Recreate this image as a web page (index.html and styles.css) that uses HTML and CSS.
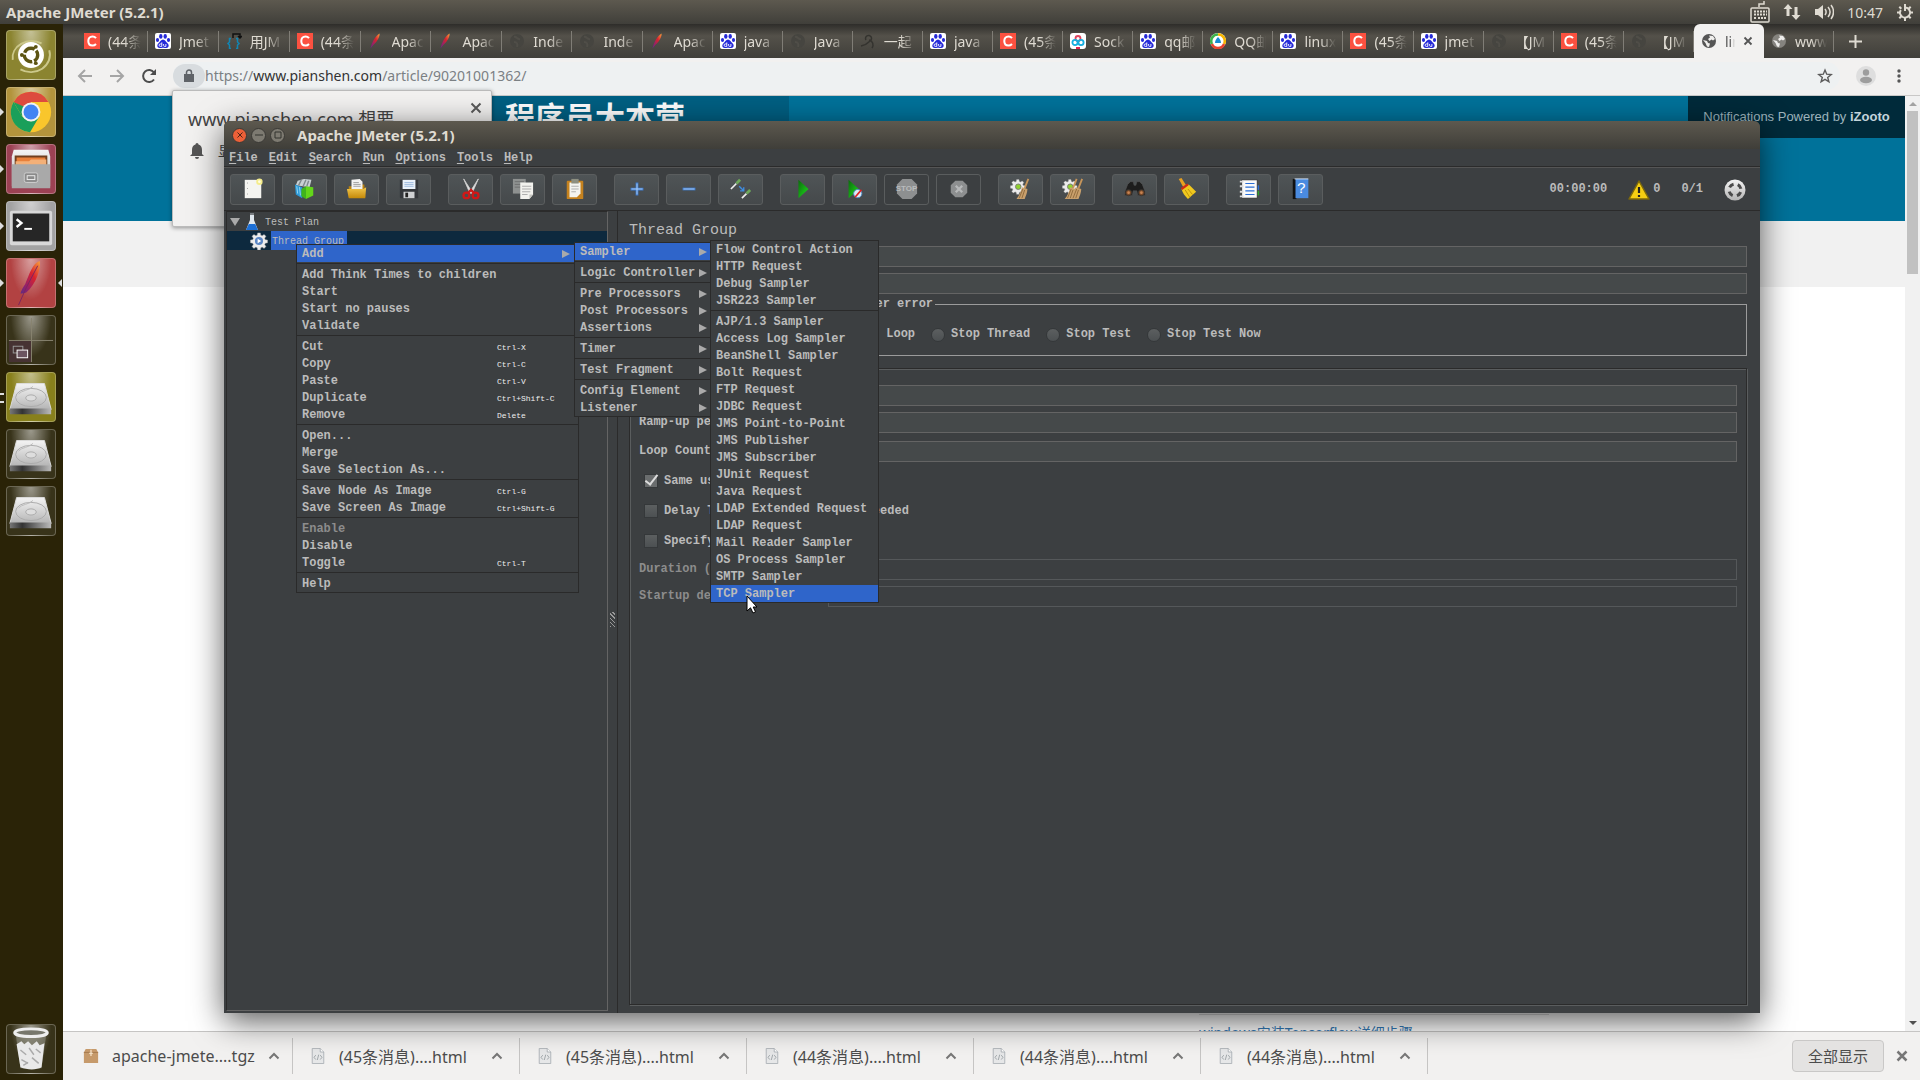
FILE: index.html
```html
<!DOCTYPE html>
<html lang="zh-CN">
<head>
    <meta charset="UTF-8">
    <meta name="viewport" content="width=device-width, initial-scale=1.0">
    <title>Apache JMeter (5.2.1)</title>
    <link rel="stylesheet" href="styles.css">
</head>
<body>
    <!-- Shared icons -->
    <svg class="defs" width="0" height="0" aria-hidden="true">
        <defs>
            <linearGradient id="metal" x1="0" y1="0" x2="0" y2="1"><stop offset="0" stop-color="#f4f4f4"/><stop offset="1" stop-color="#b4b4b4"/></linearGradient>
            <linearGradient id="base" x1="0" y1="0" x2="1" y2="0"><stop offset="0" stop-color="#777"/><stop offset=".3" stop-color="#333"/><stop offset="1" stop-color="#bbb"/></linearGradient>
            <linearGradient id="plume" x1="1" y1="0" x2="0" y2="1"><stop offset="0" stop-color="#f9a13c"/><stop offset=".4" stop-color="#d8232e"/><stop offset=".75" stop-color="#93216b"/><stop offset="1" stop-color="#5b2d84"/></linearGradient>
            <linearGradient id="go" x1="0" y1="0" x2="1" y2="1"><stop offset="0" stop-color="#0b6b0b"/><stop offset="1" stop-color="#1fe01f"/></linearGradient>
            <linearGradient id="gold" x1="0" y1="0" x2="0" y2="1"><stop offset="0" stop-color="#f3c84f"/><stop offset="1" stop-color="#c58a09"/></linearGradient>
        </defs>
        <symbol id="baidu" viewBox="0 0 16 16">
            <rect width="16" height="16" rx="2" fill="#fff"/>
            <g fill="#2529d8"><ellipse cx="5.8" cy="3.4" rx="1.7" ry="2.4"/><ellipse cx="10.2" cy="3.4" rx="1.7" ry="2.4"/><ellipse cx="2.5" cy="7" rx="1.6" ry="2.1"/><ellipse cx="13.5" cy="7" rx="1.6" ry="2.1"/><path d="M8 6.6c2 0 2.700 2.300 4.500 3.700 2 1.700 1.300 4.700-1.200 4.700-1.300 0-2-.3-3.300-.3s-2 .3-3.300.3c-2.500 0-3.200-3-1.200-4.700C5.300 8.900 6 6.600 8 6.600z"/></g>
            <path d="M6.800 9.400v4H5.300a1.200 1.200 0 010-2.400h1.500M8.600 11v1.500c0 .6.400.9.900.9h1.400V11" fill="none" stroke="#fff" stroke-width=".9"/>
        </symbol>
        <symbol id="csdn" viewBox="0 0 16 16"><rect width="16" height="16" fill="#fc5140"/><path d="M12 5.200C11 3.900 9.800 3.400 8.500 3.400 5.900 3.400 4.300 5.300 4.300 8s1.600 4.600 4.200 4.600c1.300 0 2.500-.5 3.500-1.600" fill="none" stroke="#fff" stroke-width="2"/></symbol>
        <symbol id="feather" viewBox="0 0 16 16"><path d="M2.500 15.500C3.500 10 7 3.500 11.500.5 12 3 10 7.800 5.500 11.800z" fill="url(#plume)"/></symbol>
        <symbol id="globe-dark" viewBox="0 0 16 16"><circle cx="8" cy="8" r="7" fill="#464540"/><path d="M5 4c3-1 3 3 6 2M5 9c3 0 4 2 3 5" stroke="#504e48" stroke-width="2" fill="none"/></symbol>
        <symbol id="globe" viewBox="0 0 16 16"><circle cx="8" cy="8" r="7" fill="currentColor"/><path d="M2 7l4 1 1 2 2 .5-1 3.500-2-.5-1.500-3.500zM8 2.500l4 .5 2 3-2 1.500-1.500-1L8.500 8 7 6l2-1.500z" fill="#efeeec"/></symbol>
        <symbol id="disk" viewBox="0 0 50 50">
            <path d="M10 11h29l7 27H3z" fill="url(#metal)" stroke="#ddd"/><path d="M3 37h43v6H3z" fill="url(#base)"/>
            <ellipse cx="25" cy="25.500" rx="16" ry="9.500" fill="none" stroke="#aaa"/><ellipse cx="25" cy="26" rx="5.500" ry="3.200" fill="#ddd" stroke="#aaa"/><path d="M27 14c-3 4-12 4-15 8" fill="none" stroke="#bbb"/>
        </symbol>
        <symbol id="htmlfile" viewBox="0 0 14 18"><path d="M.5.500h9l4 4v13H.5z" fill="#e6e7e8" stroke="#aab0b4"/><path d="M9.500.5v4h4" fill="#fff" stroke="#aab0b4"/><path d="M4.500 8L2.500 10.500l2 2.500M9.500 8l2 2.500-2 2.500M7.800 7.500l-1.600 6" fill="none" stroke="#9aa0a4"/></symbol>
        <symbol id="caret" viewBox="0 0 12 8"><path d="M1.500 6.500L6 2l4.500 4.500" fill="none" stroke="#777" stroke-width="2"/></symbol>
        <symbol id="gear" viewBox="0 0 20 20">
            <path d="M8.500 1h3l.5 2.500 1.500.7 2.200-1.400 2 2-1.400 2.200.7 1.500 2.500.5v3l-2.500.5-.7 1.500 1.400 2.200-2 2-2.200-1.400-1.500.7-.5 2.500h-3L8 17.500l-1.500-.7-2.200 1.400-2-2L3.700 14 3 12.500.500 12V9L3 8.500 3.700 7 2.300 4.800l2-2 2.200 1.400L8 3.500z" fill="#ececec" stroke="#aaa" stroke-width=".5"/>
        </symbol>
        <symbol id="broom" viewBox="0 0 24 24"><path d="M20 1l-4 10" stroke="#c7955a" stroke-width="2"/><path d="M13 10l6 2c0 4-2 8-3 11H7c3-4 5-8 6-13z" fill="#c9a06c"/><path d="M14 12l-4 10M16 13l-3 9" stroke="#7e5a2e" stroke-width=".8"/></symbol>
    </svg>

    <header class="panel">
        <h1>Apache JMeter (5.2.1)</h1>
        <div class="indicators">
            <svg width="20" height="22" viewBox="0 0 20 22"><path d="M9 6V3h5V0" fill="none" stroke="#dfdbd2" stroke-width="1.500"/><rect x="1" y="7" width="18" height="14" rx="1" fill="none" stroke="#dfdbd2" stroke-width="1.500"/><path d="M4 10.500h13M4 13.500h13M4 17h3m1 0h5m1 0h3" stroke="#dfdbd2" stroke-width="2" stroke-dasharray="2 1"/></svg>
            <svg width="18" height="18" viewBox="0 0 18 18"><path d="M5 1L.5 6h3v7h3V6h3zM13 17l4.500-5h-3V4h-3v8h-3z" fill="#dfdbd2"/></svg>
            <svg width="20" height="18" viewBox="0 0 20 18"><path d="M1 6h3l5-4v14l-5-4H1z" fill="#dfdbd2"/><path d="M11 6c1.500 2 1.500 4 0 6M14 4c2.500 3 2.500 7 0 10M17 2c3.300 4 3.300 10 0 14" fill="none" stroke="#dfdbd2" stroke-width="1.500"/></svg>
            <time>10:47</time>
            <svg width="18" height="18" viewBox="0 0 18 18"><circle cx="9" cy="9.500" r="5" fill="none" stroke="#dfdbd2" stroke-width="2" stroke-dasharray="26 5.400" stroke-dashoffset="-10.500" transform="rotate(150 9 9.500)"/><path d="M9 1v7M1 9.500h3m10 0h3M9 14v4M3.300 3.800l2 2M14.700 3.800l-2 2M3.300 15.200l2-2m9.400 2l-2-2" stroke="#dfdbd2" stroke-width="2"/></svg>
        </div>
    </header>

    <div class="desktop">
        <nav class="launcher">
            <a href="#" class="tile olive" title="Dash"><svg viewBox="0 0 50 50"><path d="M6 30a20 17 0 0130-17M44 20a20 18 0 01-30 20" fill="none" stroke="#ccc88a" stroke-width="2"/><circle cx="25" cy="25" r="13.500" fill="#fff"/><circle cx="25" cy="25" r="7" fill="none" stroke="#5c5413" stroke-width="3.500" stroke-dasharray="12.600 2" stroke-dashoffset="5"/><g fill="#5c5413"><circle cx="15.500" cy="25" r="2"/><circle cx="30" cy="16.500" r="2"/><circle cx="30" cy="33.500" r="2"/></g></svg></a>
            <a href="#" class="tile gold run" title="Chrome"><svg viewBox="0 0 50 50"><circle cx="25" cy="25" r="21" fill="#f9c62c"/><path d="M25 25L6.800 14.500A21 21 0 0143.200 14.500H25z" fill="#dd4b3e"/><path d="M6.800 14.500A21 21 0 0024 46l9.500-16L25 35l-9-5z" fill="#1a9f5a"/><path d="M6.800 14.500L16 30l3-10z" fill="#1a9f5a"/><circle cx="25" cy="25" r="9.800" fill="#f2f2f2"/><circle cx="25" cy="25" r="7.800" fill="#4284f3"/></svg></a>
            <a href="#" class="tile rose run" title="Files"><svg viewBox="0 0 50 50"><path d="M7 5h36l2 7v31H5V12z" fill="url(#metal)"/><path d="M8 11h34v10H8z" fill="#703f1e"/><path d="M10 13h30v8H10z" fill="#e9803a"/><path d="M9 17l14 0 2-2h16v6H9z" fill="#f3b078"/><path d="M5 20h40v25H5z" fill="#a9a9a9"/><rect x="18" y="29" width="14" height="10" rx="2" fill="#8b8b8b" stroke="#d0d0d0"/><rect x="21" y="32" width="8" height="4" fill="none" stroke="#eee"/></svg></a>
            <a href="#" class="tile silver run" title="Terminal"><svg viewBox="0 0 50 50"><rect x="3" y="9" width="44" height="36" rx="2" fill="#d8d8d8"/><rect x="6" y="12" width="38" height="29" fill="#262626"/><path d="M10 18l5 4-5 4" fill="none" stroke="#fff" stroke-width="2.500"/><path d="M18 28h8" stroke="#fff" stroke-width="2"/></svg></a>
            <a href="#" class="tile red run active" title="JMeter"><svg viewBox="0 0 50 50"><path d="M14 36c1-4 3-7 5-10 4-10 8-22 15-24 2 8-4 24-14 33-2 1-4 1-6 1z" fill="url(#plume)"/><path d="M12 48l8-18L32 7" stroke="#7b2560" fill="none"/></svg></a>
            <a href="#" class="tile glass" title="Workspaces"><svg viewBox="0 0 50 50"><path d="M2 26h23v22H2z" fill="#463233"/><path d="M25.500 2v46M2 25.500h46" stroke="#888470"/><rect x="6.500" y="31.500" width="10" height="7" fill="none" stroke="#999"/><rect x="10.500" y="35.500" width="11" height="8" fill="#6b5460" stroke="#fff"/></svg></a>
            <a href="#" class="tile moss run twice" title="Disk 1"><svg><use href="#disk"/></svg></a>
            <a href="#" class="tile glass" title="Disk 2"><svg><use href="#disk"/></svg></a>
            <a href="#" class="tile glass" title="Disk 3"><svg><use href="#disk"/></svg></a>
            <a href="#" class="tile glass trash" title="Trash"><svg viewBox="0 0 50 50"><path d="M9 9h32l-5 36H14z" fill="#8e8d80" opacity=".6"/><path d="M10 20l5-3 3 3 4-3 4 4 5-4 3 4 5-2-3 25c-5 3-15 3-22 0z" fill="#e9e9e9"/><path d="M14 26l6 5m3-7l5 7m2-6l5 4M15 36l7 4m4-6l7 6M17 42l5-3" stroke="#aaa" stroke-width="1.500"/><ellipse cx="25" cy="8" rx="17" ry="4" fill="#77776c" stroke="#eee" stroke-width="3"/></svg></a>
        </nav>

        <main class="browser">
            <div class="tabs">
                <a href="#" class="tab"><svg><use href="#csdn"/></svg><span>(44条</span></a>
                <a href="#" class="tab"><svg><use href="#baidu"/></svg><span>Jmet</span></a>
                <a href="#" class="tab"><svg viewBox="0 0 16 16"><path d="M5 5.500H3.500V9L2 10.500 3.500 12v3.500H5M10 5.500h1.500V9l1.500 1.500-1.500 1.500v3.500H10" fill="none" stroke="#1186b4" stroke-width="1.500"/><path d="M7 5V1h7v4m-2-2l2 2 2-2" fill="none" stroke="#111" stroke-width="1.500"/></svg><span>用JM</span></a>
                <a href="#" class="tab"><svg><use href="#csdn"/></svg><span>(44条</span></a>
                <a href="#" class="tab"><svg><use href="#feather"/></svg><span>Apac</span></a>
                <a href="#" class="tab"><svg><use href="#feather"/></svg><span>Apac</span></a>
                <a href="#" class="tab"><svg><use href="#globe-dark"/></svg><span>Inde</span></a>
                <a href="#" class="tab"><svg><use href="#globe-dark"/></svg><span>Inde</span></a>
                <a href="#" class="tab"><svg><use href="#feather"/></svg><span>Apac</span></a>
                <a href="#" class="tab"><svg><use href="#baidu"/></svg><span>java</span></a>
                <a href="#" class="tab"><svg><use href="#globe-dark"/></svg><span>Java</span></a>
                <a href="#" class="tab"><svg viewBox="0 0 16 16"><path d="M6 7a3 3 0 114 1c-2 2-3 4-9 5m8-6c4 1 5 5 3 8" fill="none" stroke="#34332f" stroke-width="1.500"/></svg><span>一起</span></a>
                <a href="#" class="tab"><svg><use href="#baidu"/></svg><span>java</span></a>
                <a href="#" class="tab"><svg><use href="#csdn"/></svg><span>(45条</span></a>
                <a href="#" class="tab"><svg viewBox="0 0 16 16"><rect width="16" height="16" rx="3" fill="#fff"/><g fill="none" stroke-width="1.800"><circle cx="8" cy="5.500" r="2.500" stroke="#e0455f"/><circle cx="5" cy="9.500" r="2.600" stroke="#16aee0"/><circle cx="11" cy="9.500" r="2.600" stroke="#16aee0"/></g><path d="M6 15h4" stroke="#e0244f" stroke-width="2"/></svg><span>Sock</span></a>
                <a href="#" class="tab"><svg><use href="#baidu"/></svg><span>qq邮</span></a>
                <a href="#" class="tab"><svg viewBox="0 0 16 16"><circle cx="8" cy="8" r="8" fill="#fff"/><path d="M8 1.500A6.500 6.500 0 002 11" fill="none" stroke="#3db14b" stroke-width="2.500"/><path d="M8 1.500A6.500 6.500 0 0114 11" fill="none" stroke="#f7b500" stroke-width="2.500"/><path d="M2 11a6.500 6.500 0 0012 0" fill="none" stroke="#e8432e" stroke-width="2.500"/><path d="M8 4c2 2 3 4 3 6H5c0-2 1-4 3-6z" fill="#178bd3"/></svg><span>QQ邮</span></a>
                <a href="#" class="tab"><svg><use href="#baidu"/></svg><span>linux</span></a>
                <a href="#" class="tab"><svg><use href="#csdn"/></svg><span>(45条</span></a>
                <a href="#" class="tab"><svg><use href="#baidu"/></svg><span>jmet</span></a>
                <a href="#" class="tab"><svg><use href="#globe-dark"/></svg><span>【JM</span></a>
                <a href="#" class="tab"><svg><use href="#csdn"/></svg><span>(45条</span></a>
                <a href="#" class="tab"><svg><use href="#globe-dark"/></svg><span>【JM</span></a>
                <a href="#" class="tab current"><svg><use href="#globe"/></svg><span>lin</span><svg class="x" viewBox="0 0 10 10"><path d="M1.500 1.500l7 7m0-7l-7 7" stroke="#555" stroke-width="1.800"/></svg></a>
                <a href="#" class="tab grey"><svg><use href="#globe"/></svg><span>www</span></a>
                <button class="newtab" aria-label="New tab"><svg width="13" height="13" viewBox="0 0 13 13"><path d="M6.500 0v13M0 6.500h13" stroke="#dfdbd2" stroke-width="2"/></svg></button>
            </div>

            <div class="address">
                <button aria-label="Back"><svg viewBox="0 0 16 16"><path d="M15 8H2m6-6L2 8l6 6" fill="none" stroke="#a5a5a5" stroke-width="2"/></svg></button>
                <button aria-label="Forward"><svg viewBox="0 0 16 16"><path d="M1 8h13M8 2l6 6-6 6" fill="none" stroke="#a5a5a5" stroke-width="2"/></svg></button>
                <button aria-label="Reload"><svg viewBox="0 0 16 16"><path d="M13 11.500A6 6 0 1113 4.500" fill="none" stroke="#4c4c4c" stroke-width="2"/><path d="M15 1v6H9z" fill="#4c4c4c"/></svg></button>
                <div class="omnibox">
                    <span class="lock"><svg width="10" height="13" viewBox="0 0 10 13"><path d="M0 5h10v8H0z" fill="#5f6368"/><path d="M2.500 6V3.500a2.500 2.500 0 015 0V6" fill="none" stroke="#5f6368" stroke-width="1.500"/></svg></span>
                    <span class="url">https://<b>www.pianshen.com</b>/article/90201001362/</span>
                    <svg width="16" height="16" viewBox="0 0 16 16"><path d="M8 2l1.700 4.200 4.500.3-3.500 2.900 1.200 4.400L8 11.400l-3.900 2.400 1.200-4.400L1.800 6.500l4.500-.3z" fill="none" stroke="#5c5c5c" stroke-width="1.400"/></svg>
                </div>
                <svg class="avatar" viewBox="0 0 20 20"><circle cx="10" cy="10" r="10" fill="#dedede"/><circle cx="10" cy="6.500" r="3.200" fill="#9d9d9d"/><ellipse cx="10" cy="14" rx="6" ry="3.200" fill="#9d9d9d"/></svg>
                <svg class="dots" viewBox="0 0 4 14"><g fill="#555"><circle cx="2" cy="2" r="1.700"/><circle cx="2" cy="7" r="1.700"/><circle cx="2" cy="12" r="1.700"/></g></svg>
            </div>

            <div class="page">
                <div class="site">
                    <div class="masthead">
                        <div class="logo">程序员大本营</div>
                        <div class="izooto">Notifications Powered by <b>iZooto</b></div>
                    </div>
                    <div class="subnav"></div>
                    <a href="#" class="related">windows安装Tensorflow详细步骤</a>
                </div>
                <div class="scrollbar"><i class="up"></i><div class="thumb"></div><i class="down"></i></div>
            </div>

            <footer class="downloads">
                <div class="file"><svg viewBox="0 0 18 18"><path d="M3 1h12l2 4v12H1V5z" fill="#c69a6b"/><path d="M1 5h16" stroke="#a3794c"/><path d="M9 2v7M7 6h4" stroke="#f3dfc4" stroke-width="1.500"/></svg><span>apache-jmete....tgz</span><svg class="caret"><use href="#caret"/></svg></div>
                <div class="file"><svg><use href="#htmlfile"/></svg><span>(45条消息)....html</span><svg class="caret"><use href="#caret"/></svg></div>
                <div class="file"><svg><use href="#htmlfile"/></svg><span>(45条消息)....html</span><svg class="caret"><use href="#caret"/></svg></div>
                <div class="file"><svg><use href="#htmlfile"/></svg><span>(44条消息)....html</span><svg class="caret"><use href="#caret"/></svg></div>
                <div class="file"><svg><use href="#htmlfile"/></svg><span>(44条消息)....html</span><svg class="caret"><use href="#caret"/></svg></div>
                <div class="file"><svg><use href="#htmlfile"/></svg><span>(44条消息)....html</span><svg class="caret"><use href="#caret"/></svg></div>
                <button class="show-all">全部显示</button>
                <button class="close" aria-label="Close"><svg width="12" height="12" viewBox="0 0 12 12"><path d="M1.500 1.500l9 9m0-9l-9 9" stroke="#777" stroke-width="2.500"/></svg></button>
            </footer>
        </main>
    </div>

    <div class="permission">
        <div class="ask"><span>www.pianshen.com 想要</span><button aria-label="Close"><svg width="12" height="12" viewBox="0 0 12 12"><path d="M1.500 1.500l9 9m0-9l-9 9" stroke="#5a5a5a" stroke-width="2"/></svg></button></div>
        <div class="what"><svg width="14" height="16" viewBox="0 0 14 16"><path d="M7 0a1.500 1.500 0 011.500 1.500C11 2.300 12 4 12 7v4l2 2H0l2-2V7c0-3 1-4.700 3.500-5.500A1.500 1.500 0 017 0zM5 14h4a2 2 0 01-4 0z" fill="#555"/></svg><span>显示通知</span></div>
    </div>

    <section class="jmeter">
        <div class="titlebar">
            <button class="dot shut" aria-label="Close"><svg viewBox="0 0 8 8"><path d="M1.500 1.500l5 5m0-5l-5 5" stroke="#4b2417"/></svg></button>
            <button class="dot" aria-label="Minimize"><svg viewBox="0 0 8 8"><path d="M0 4h8" stroke="#33322e"/></svg></button>
            <button class="dot" aria-label="Maximize"><svg viewBox="0 0 8 8"><path d="M1 1h6v6H1z" fill="none" stroke="#33322e"/></svg></button>
            <h2>Apache JMeter (5.2.1)</h2>
        </div>
        <nav class="menubar">
            <button><u>F</u>ile</button>
            <button><u>E</u>dit</button>
            <button><u>S</u>earch</button>
            <button><u>R</u>un</button>
            <button><u>O</u>ptions</button>
            <button><u>T</u>ools</button>
            <button><u>H</u>elp</button>
        </nav>

        <div class="toolbar">
            <div class="group">
                <button aria-label="New"><svg viewBox="0 0 24 24"><path d="M3 2h18v20H3z" fill="#f4f4f0"/><path d="M6 5v14" stroke="#999" stroke-dasharray="1 5"/><circle cx="19" cy="4" r="3.500" fill="#f4ec8c"/><circle cx="19" cy="4" r="1.500" fill="#fffde0"/></svg></button>
                <button aria-label="Templates"><svg viewBox="0 0 24 24"><path d="M2 8l2-5 7-2 8 1-2 8z" fill="#c9d0d3"/><path d="M5 8l3-6m2 7l3-7m1 7l2-6" stroke="#7f898d" stroke-width="1.500"/><path d="M1 7l8 3v12l-7-4z" fill="#2c9ad8"/><path d="M3 9l1 8m2-7l1 9" stroke="#9edbf5"/><path d="M8 12l5-3v14l-5-3z" fill="#3fb51b"/><path d="M13 9l8 1v9l-8 4z" fill="#63d61a"/></svg></button>
                <button aria-label="Open"><svg viewBox="0 0 24 24"><path d="M3 9h4l1-2h12l1 14H3z" fill="#b98212"/><path d="M6 2l9-1 3 3v9H6z" fill="#f2f2f2"/><path d="M8 5h6M8 7h8M8 9h8" stroke="#999"/><path d="M1 12h18l3-2-1 12H3z" fill="url(#gold)"/></svg></button>
                <button aria-label="Save"><svg viewBox="0 0 24 24"><path d="M2 2h20v20H3l-1-1z" fill="#34373b"/><path d="M5 2h14v10H5z" fill="#e9f1fa"/><path d="M7 5h10M7 7h10M7 9h10" stroke="#98b7dc"/><path d="M6 15h12v7H6z" fill="#cfd1d3"/><path d="M8 16h3v5H8z" fill="#222"/></svg></button>
            </div>
            <div class="group">
                <button aria-label="Cut"><svg viewBox="0 0 24 24"><path d="M4 1l9 14-2 2zM20 1l-9 14 2 2z" fill="#e9e9e9" stroke="#ccc"/><ellipse cx="7" cy="19" rx="3.200" ry="3" fill="none" stroke="#d01818" stroke-width="2.500"/><ellipse cx="17" cy="19" rx="3.200" ry="3" fill="none" stroke="#d01818" stroke-width="2.500"/><path d="M9 16l3-3 3 3" fill="none" stroke="#d01818" stroke-width="2.500"/></svg></button>
                <button aria-label="Copy"><svg viewBox="0 0 24 24"><path d="M1 1h14v16H1z" fill="#8e9190"/><path d="M3 4h10M3 7h10M3 10h10" stroke="#6c6f6e"/><path d="M9 5h14v13l-4 5H9z" fill="#f2f2ee"/><path d="M11 9h10M11 12h10M11 15h9M11 18h6" stroke="#a7a7a7"/><path d="M23 18h-4v5z" fill="#c5c5c0"/></svg></button>
                <button aria-label="Paste"><svg viewBox="0 0 24 24"><rect x="3" y="3" width="18" height="20" rx="1" fill="#c5821f"/><path d="M6 5h12v12l-4 4H6z" fill="#f4f4f0"/><path d="M8 1h8v5H8z" fill="#8d8f80"/><path d="M8 9h8M8 12h8M8 15h5" stroke="#aaa"/></svg></button>
            </div>
            <div class="group">
                <button aria-label="Expand"><svg viewBox="0 0 24 24"><path d="M12 5v14M5 12h14" stroke="#3c7bd0" stroke-width="3"/><path d="M12 6v12M6 12h12" stroke="#b7d3f5"/></svg></button>
                <button aria-label="Collapse"><svg viewBox="0 0 24 24"><path d="M5 12h14" stroke="#3c7bd0" stroke-width="3"/><path d="M6 12h12" stroke="#b7d3f5"/></svg></button>
                <button aria-label="Toggle"><svg viewBox="0 0 24 24"><path d="M1 12l6-6M13 22l5-5" stroke="#eee" stroke-width="1.800"/><path d="M7 6l4-4M18 17l4-4" stroke="#6da85a" stroke-width="3"/><path d="M10 9l5 5m0-4v4h-4" stroke="#3f8de0" stroke-width="1.500" fill="none"/></svg></button>
            </div>
            <div class="group">
                <button aria-label="Start"><svg viewBox="0 0 24 24"><path d="M7 2l11 10L7 22z" fill="url(#go)"/></svg></button>
                <button aria-label="Start no pauses"><svg viewBox="0 0 24 24"><path d="M5 2l11 10L5 22z" fill="url(#go)"/><circle cx="15" cy="17" r="4.500" fill="#dce9f6" stroke="#4a8ac4"/><path d="M12 21l7-8" stroke="#d22" stroke-width="1.800"/></svg></button>
                <button disabled class="stop"><svg viewBox="0 0 24 24"><path d="M7 1h10l6 6v10l-6 6H7l-6-6V7z" fill="#8d8f90"/></svg><span>STOP</span></button>
                <button disabled aria-label="Shutdown"><svg viewBox="0 0 24 24"><path d="M8 3h8l5 5v8l-5 5H8l-5-5V8z" fill="#8d8f90"/><path d="M8.500 8.500l7 7m0-7l-7 7" stroke="#b7b9ba" stroke-width="2.500"/></svg></button>
            </div>
            <div class="group">
                <button aria-label="Clear"><svg viewBox="0 0 24 24"><g transform="scale(.85)"><use href="#gear" width="20" height="22"/></g><circle cx="9" cy="9.500" r="3" fill="#8fd12e" stroke="#777"/><use href="#broom" width="24" height="24"/></svg></button>
                <button aria-label="Clear all"><svg viewBox="0 0 24 24"><g transform="scale(.85)"><use href="#gear" width="20" height="22"/></g><circle cx="9" cy="9.500" r="3" fill="#8fd12e" stroke="#777"/><use href="#broom" x="-4" width="24" height="24"/><use href="#broom" x="2" width="24" height="24"/></svg></button>
            </div>
            <div class="group">
                <button aria-label="Search"><svg viewBox="0 0 24 24"><path d="M4 7l3-3h3l1 4h2l1-4h3l3 3 3 8v4h-8l-1-5h-4l-1 5H1v-4z" fill="#1d1d1d" stroke="#555" stroke-width=".6"/><circle cx="5" cy="16" r="3.300" fill="#7b4a27" stroke="#333"/><circle cx="19" cy="16" r="3.300" fill="#7b4a27" stroke="#333"/><circle cx="5" cy="16" r="1.500" fill="#c78454"/><circle cx="19" cy="16" r="1.500" fill="#c78454"/></svg></button>
                <button aria-label="Reset search"><svg viewBox="0 0 24 24"><path d="M3 1l3-1 5 8-3 2z" fill="#e8a020"/><path d="M6 12l8-5 8 8-9 8c-3-3-6-7-7-11z" fill="#f0c81e"/><path d="M6 12l7-5" stroke="#cf2a17" stroke-width="2.500"/><path d="M10 13l5 8m-2-9l5 6" stroke="#b98e0a"/></svg></button>
            </div>
            <div class="group">
                <button aria-label="Function helper"><svg viewBox="0 0 24 24"><path d="M19 8h4v5h-4z" fill="#2b6fd6"/><path d="M19 14h4v5h-4z" fill="#2da12d"/><path d="M4 2h17v20H4z" fill="#fafafa" stroke="#222" stroke-width=".8"/><path d="M8 6h10M8 10h10M8 14h10M8 18h10" stroke="#2b6fd6" stroke-width="1.200"/><path d="M2 4h4M2 9h4M2 15h4M2 20h4" stroke="#ddd" stroke-width="2"/></svg></button>
                <button aria-label="Help" class="help"><svg viewBox="0 0 24 24"><path d="M3 1h4v22H3z" fill="#111"/><path d="M6 1h14v21H6z" fill="#4a8be0"/><path d="M5 1h15" stroke="#dce9fa"/></svg><span>?</span></button>
            </div>
            <div class="status">
                <span>00:00:00</span>
                <span class="warn"><svg width="22" height="22" viewBox="0 0 22 22"><path d="M11 2l10 18H1z" fill="#f6cf12" stroke="#7d6a0b" stroke-width="1.500" stroke-linejoin="round"/><path d="M11 8v6M11 16v2" stroke="#222" stroke-width="2.200"/></svg>0</span>
                <span>0/1</span>
                <svg width="22" height="22" viewBox="0 0 22 22"><circle cx="11" cy="11" r="10.500" fill="url(#metal)"/><circle cx="11" cy="11" r="6" fill="none" stroke="#4a4a4a" stroke-width="3" stroke-dasharray="5 4.420" stroke-dashoffset="-2.200"/></svg>
            </div>
        </div>

        <div class="split">
            <ul class="tree">
                <li><i class="twist"></i><svg width="14" height="18" viewBox="0 0 14 18"><path d="M5 2h4v5l4 10H1L5 7z" fill="#dfe7ee"/><path d="M3.800 11h6.400l2.800 6H1z" fill="#1c6fd6"/><path d="M5 1h4" stroke="#b5bcc2"/></svg><span>Test Plan</span></li>
                <li class="selected"><svg width="18" height="18" viewBox="0 0 20 20"><use href="#gear"/><circle cx="10" cy="10" r="4.500" fill="#5a86c4"/><path d="M8.500 7.500l4 2.500-4 2.500z" fill="#fff"/></svg><span>Thread Group</span></li>
            </ul>
            <div class="divider"><i></i></div>
            <form class="editor">
                <h3>Thread Group</h3>
                <div class="field"><label for="name">Name:</label><input id="name" type="text"></div>
                <div class="field"><label for="comments">Comments:</label><input id="comments" type="text"></div>
                <fieldset class="on-error">
                    <legend>Action to be taken after a Sampler error</legend>
                    <label><input type="radio" name="action" checked>Continue</label>
                    <label><input type="radio" name="action">Start Next Thread Loop</label>
                    <label><input type="radio" name="action">Stop Thread</label>
                    <label><input type="radio" name="action">Stop Test</label>
                    <label><input type="radio" name="action">Stop Test Now</label>
                </fieldset>
                <fieldset class="props">
                    <legend>Thread Properties</legend>
                    <div class="field"><label for="threads">Number of Threads (users):</label><input id="threads" type="text"></div>
                    <div class="field"><label for="ramp">Ramp-up period (seconds):</label><input id="ramp" type="text"></div>
                    <div class="field loops"><label for="loops">Loop Count:</label><input id="loops" type="text"></div>
                    <label class="check"><input type="checkbox" checked>Same user on each iteration</label>
                    <label class="check"><input type="checkbox">Delay Thread creation until needed</label>
                    <label class="check"><input type="checkbox">Specify Thread lifetime</label>
                    <div class="field off lifetime"><label for="duration">Duration (seconds):</label><input id="duration" type="text" disabled></div>
                    <div class="field off"><label for="delay">Startup delay (seconds):</label><input id="delay" type="text" disabled></div>
                </fieldset>
            </form>
        </div>

        <div class="menu context">
            <button class="hot sub">Add</button>
            <hr>
            <button>Add Think Times to children</button>
            <button>Start</button>
            <button>Start no pauses</button>
            <button>Validate</button>
            <hr>
            <button>Cut<kbd>Ctrl-X</kbd></button>
            <button>Copy<kbd>Ctrl-C</kbd></button>
            <button>Paste<kbd>Ctrl-V</kbd></button>
            <button>Duplicate<kbd>Ctrl+Shift-C</kbd></button>
            <button>Remove<kbd>Delete</kbd></button>
            <hr>
            <button>Open...</button>
            <button>Merge</button>
            <button>Save Selection As...</button>
            <hr>
            <button>Save Node As Image<kbd>Ctrl-G</kbd></button>
            <button>Save Screen As Image<kbd>Ctrl+Shift-G</kbd></button>
            <hr>
            <button disabled>Enable</button>
            <button>Disable</button>
            <button>Toggle<kbd>Ctrl-T</kbd></button>
            <hr>
            <button>Help</button>
        </div>

        <div class="menu add">
            <button class="hot sub">Sampler</button>
            <hr>
            <button class="sub">Logic Controller</button>
            <hr>
            <button class="sub">Pre Processors</button>
            <button class="sub">Post Processors</button>
            <button class="sub">Assertions</button>
            <hr>
            <button class="sub">Timer</button>
            <hr>
            <button class="sub">Test Fragment</button>
            <hr>
            <button class="sub">Config Element</button>
            <button class="sub">Listener</button>
        </div>

        <div class="menu samplers">
            <button>Flow Control Action</button>
            <button>HTTP Request</button>
            <button>Debug Sampler</button>
            <button>JSR223 Sampler</button>
            <hr>
            <button>AJP/1.3 Sampler</button>
            <button>Access Log Sampler</button>
            <button>BeanShell Sampler</button>
            <button>Bolt Request</button>
            <button>FTP Request</button>
            <button>JDBC Request</button>
            <button>JMS Point-to-Point</button>
            <button>JMS Publisher</button>
            <button>JMS Subscriber</button>
            <button>JUnit Request</button>
            <button>Java Request</button>
            <button>LDAP Extended Request</button>
            <button>LDAP Request</button>
            <button>Mail Reader Sampler</button>
            <button>OS Process Sampler</button>
            <button>SMTP Sampler</button>
            <button class="hot">TCP Sampler</button>
        </div>

        <svg class="pointer" viewBox="0 0 12 19"><path d="M1 1v15l3.500-3.200L7 18l2.500-1.200L7.200 12H11z" fill="#fff" stroke="#000"/></svg>
    </section>
</body>
</html>
```
FILE: styles.css
```css
* {
    box-sizing: border-box;
}

body {
    margin: 0;
    height: 100vh;
    display: flex;
    flex-direction: column;
    overflow: hidden;
    position: relative;
    font-family: "Noto Sans", "Noto Sans CJK SC", sans-serif;
    font-size: 14px;
}

h1, h2, h3, ul {
    margin: 0;
    padding: 0;
}

a {
    color: inherit;
    text-decoration: none;
}

button {
    font: inherit;
    color: inherit;
    background: none;
    border: none;
    padding: 0;
}

svg {
    flex: none;
    display: block;
}

.defs {
    position: absolute;
}

/* top panel */
.panel {
    flex: none;
    height: 24px;
    padding: 0 6px;
    display: flex;
    align-items: center;
    justify-content: space-between;
    background: linear-gradient(#5d594f, #403f3a);
    color: #dfdbd2;
}

.panel h1, .titlebar h2 {
    font-size: 15px;
    font-weight: bold;
    line-height: 20px;
}

.indicators {
    display: flex;
    align-items: center;
    gap: 13px;
}

.desktop {
    flex: 1;
    min-height: 0;
    display: flex;
}

/* launcher */
.launcher {
    flex: none;
    width: 63px;
    padding: 6px;
    display: flex;
    flex-direction: column;
    gap: 7px;
    background: #2a2307;
}

.tile {
    position: relative;
    width: 50px;
    height: 50px;
    border-radius: 4px;
    border: 1px solid rgba(255, 255, 255, 0.25);
    background-image: radial-gradient(ellipse at 50% 0, rgba(255, 255, 255, 0.5), rgba(255, 255, 255, 0) 60%);
}

.tile svg {
    width: 48px;
    height: 48px;
}

.olive { background-color: #8b8430; }
.gold { background-color: #b3943c; }
.rose { background-color: #9c4153; }
.silver { background-color: #a2a2a2; }
.red { background-color: #b24242; }
.glass { background-color: #38331a; }
.moss { background-color: #88801c; }
.trash { margin-top: auto; }

.run::before, .active::after {
    content: "";
    position: absolute;
    top: 20px;
    left: -7px;
    border: 4px solid transparent;
    border-left-color: #ddd;
    border-right: none;
}

.active::after {
    left: auto;
    right: -7px;
    border: 4px solid transparent;
    border-right-color: #ddd;
    border-left: none;
}

.twice::before {
    border: none;
    border-top: 2px solid #ddd;
    border-bottom: 2px solid #ddd;
    width: 4px;
    height: 6px;
}

/* browser */
.browser {
    flex: 1;
    min-width: 0;
    display: flex;
    flex-direction: column;
}

.tabs {
    flex: none;
    height: 34px;
    padding: 0 86px 0 14px;
    display: flex;
    align-items: flex-end;
    background: linear-gradient(#2e2d2a, #54514a 12px, #403f3a);
    color: #dfdbd2;
    position: relative;
}

.tab {
    flex: 70 1 0;
    min-width: 0;
    height: 34px;
    padding: 0 7px;
    display: flex;
    align-items: center;
    gap: 8px;
    position: relative;
}

.tab:nth-child(-n+6) {
    flex-grow: 71;
}

.tab::after {
    content: "";
    position: absolute;
    right: 0;
    top: 7px;
    width: 1px;
    height: 21px;
    background: #807d76;
}

.tab svg {
    width: 16px;
    height: 16px;
}

.tab span {
    flex: 1;
    overflow: hidden;
    white-space: nowrap;
    text-spacing-trim: space-all;
    -webkit-mask-image: linear-gradient(90deg, #000 50%, transparent);
    mask-image: linear-gradient(90deg, #000 50%, transparent);
}

.tab.current {
    background: #f2f1f0;
    color: #555;
    border-radius: 6px 6px 0 0;
}

.tab.grey {
    color: #85837e;
}

.tab.grey span {
    color: #dfdbd2;
}

.tab.current::after {
    display: none;
}

.tab .x {
    width: 10px;
    height: 10px;
    margin-right: 4px;
}

.newtab {
    position: absolute;
    right: 58px;
    top: 11px;
}

.address {
    flex: none;
    height: 38px;
    padding: 0 19px 2px 14px;
    display: flex;
    align-items: center;
    gap: 16px;
    background: #f2f1f0;
    border-bottom: 1px solid #c9c8c7;
}

.address button svg {
    width: 16px;
    height: 16px;
}

.omnibox {
    flex: 1;
    height: 28px;
    display: flex;
    align-items: center;
    border-radius: 14px;
    background: #eef1f2;
    padding-right: 7px;
}

.lock {
    width: 32px;
    height: 24px;
    border-radius: 12px;
    background: #d8dcdf;
    display: flex;
    align-items: center;
    justify-content: center;
}

.url {
    flex: 1;
    color: #7b8084;
}

.url b {
    color: #333;
    font-weight: normal;
}

.avatar {
    width: 20px;
    height: 20px;
}

.dots {
    width: 4px;
    height: 14px;
    margin-left: 5px;
}

.page {
    flex: 1;
    min-height: 0;
    display: flex;
    background: #fff;
}

.site {
    flex: 1;
    display: flex;
    flex-direction: column;
    overflow: hidden;
}

.masthead {
    flex: none;
    height: 125px;
    padding-left: 429px;
    display: flex;
    justify-content: space-between;
    align-items: flex-start;
    background: #00729a;
}

.logo {
    width: 297px;
    height: 125px;
    padding-left: 13px;
    background: #005f82;
    color: #fff;
    font-size: 30px;
    font-weight: bold;
    line-height: 42px;
}

.izooto {
    height: 42px;
    width: 217px;
    text-align: center;
    line-height: 42px;
    background: #002a3a;
    color: #9db3bc;
    font-family: "Liberation Sans", sans-serif;
    font-size: 13px;
}

.izooto b {
    color: #c3d4db;
}

.subnav {
    flex: none;
    height: 66px;
    background: #f1f1f1;
}

.related {
    margin: auto 356px -16px auto;
    width: 350px;
    padding-top: 4px;
    border-top: 1px solid #ddd;
    color: #337ab7;
    line-height: 28px;
}

.scrollbar {
    width: 15px;
    padding: 6px 2px;
    background: #f1f1f1;
    display: flex;
    flex-direction: column;
    align-items: center;
    gap: 5px;
}

.thumb {
    width: 11px;
    height: 163px;
    background: #c1c1c1;
}

.up, .down {
    border: 4px solid transparent;
    border-top: none;
    border-bottom-color: #a3a3a3;
}

.down {
    margin-top: auto;
    border-top: 4px solid #505050;
    border-bottom: none;
}

.downloads {
    flex: none;
    height: 49px;
    padding: 0 12px 0 3px;
    display: flex;
    align-items: center;
    background: #f2f1f0;
    border-top: 1px solid #c6c5c4;
    color: #4c4c4c;
    font-size: 16px;
}

.file {
    width: 227px;
    height: 36px;
    padding: 0 16px 0 17px;
    display: flex;
    align-items: center;
    gap: 13px;
    border-right: 1px solid #c6c5c4;
}

.file svg {
    width: 16px;
    height: 16px;
}

.file span {
    flex: 1;
    white-space: nowrap;
}

.file .caret {
    width: 12px;
    height: 8px;
}

.show-all {
    margin-left: auto;
    width: 92px;
    height: 32px;
    border: 1px solid #c9c8c7;
    border-radius: 4px;
    background: #e4e3e2;
    font-size: 15px;
    line-height: 20px;
}

.close {
    margin-left: 12px;
}

/* notification permission bubble */
.permission {
    position: absolute;
    left: 172px;
    top: 90px;
    width: 320px;
    height: 137px;
    padding: 11px 9px 12px 15px;
    background: #f2f1f0;
    border: 1px solid #bbb;
    border-radius: 2px;
    box-shadow: 0 1px 4px rgba(0, 0, 0, 0.4);
    color: #444;
}

.ask {
    display: flex;
    justify-content: space-between;
    align-items: flex-start;
    font-size: 18px;
    line-height: 34px;
}

.ask button {
    line-height: 0;
}

.what {
    display: flex;
    align-items: center;
    gap: 14px;
    margin-top: 3px;
    padding-left: 2px;
    line-height: 24px;
}

/* JMeter window */
.jmeter {
    position: absolute;
    left: 224px;
    right: 160px;
    top: 121px;
    bottom: 67px;
    display: flex;
    flex-direction: column;
    background: #3c3f41;
    color: #bbb;
    border-radius: 6px 6px 0 0;
    box-shadow: 0 8px 32px rgba(0, 0, 0, 0.65);
    font-family: "Liberation Mono", monospace;
    font-size: 12px;
    font-weight: bold;
    line-height: 17px;
}

.titlebar {
    flex: none;
    height: 28px;
    padding-left: 8px;
    display: flex;
    align-items: center;
    gap: 4px;
    border-radius: 6px 6px 0 0;
    background: linear-gradient(#5d594f, #3f3e39);
    color: #dfdbd2;
    font-family: "Noto Sans", sans-serif;
}

.titlebar h2 {
    margin-left: 8px;
}

.dot {
    width: 15px;
    height: 15px;
    display: flex;
    align-items: center;
    justify-content: center;
    border-radius: 50%;
    border: 1px solid #3a3935;
    background: #7d7a71;
}

.dot svg {
    width: 8px;
    height: 8px;
}

.shut {
    background: #ec6038;
}

.menubar {
    flex: none;
    height: 18px;
    padding: 1px 0 0 5px;
    display: flex;
    gap: 11px;
    border-bottom: 1px solid #2b2b2b;
}

.menubar u {
    text-underline-offset: 2px;
}

.toolbar {
    flex: none;
    height: 44px;
    padding: 0 14px 0 6px;
    display: flex;
    align-items: center;
    gap: 17px;
    border-top: 1px solid #555;
    border-bottom: 1px solid #2b2b2b;
}

.group {
    display: flex;
    gap: 7px;
}

.group button {
    width: 45px;
    height: 31px;
    display: grid;
    place-items: center;
    border: 1px solid #5a5d5e;
    border-radius: 3px;
    background: linear-gradient(#4f5456, #45494b);
}

.group button:disabled {
    background: none;
}

.group svg {
    width: 22px;
    height: 22px;
}

.stop > *, .help > * {
    grid-area: 1 / 1;
}

.stop span {
    font: bold 8px/10px "Liberation Sans", sans-serif;
    color: #b9bbbc;
}

.help span {
    color: #fff;
    font-size: 15px;
    font-weight: normal;
    padding-left: 2px;
}

.status {
    margin-left: auto;
    padding-top: 1px;
    display: flex;
    align-items: center;
    gap: 21px;
}

.warn {
    display: flex;
    align-items: center;
    gap: 3px;
}

.split {
    flex: 1;
    min-height: 0;
    display: flex;
    padding-left: 2px;
}

.tree {
    width: 382px;
    margin-bottom: 2px;
    list-style: none;
    font-size: 10px;
    font-weight: normal;
    border: 1px solid #2b2b2b;
    border-right-color: #646464;
    border-bottom-color: #646464;
}

.tree li {
    height: 19px;
    padding-left: 3px;
    display: flex;
    align-items: center;
    gap: 5px;
}

.tree .selected {
    padding-left: 23px;
    gap: 3px;
    background: #0d293e;
}

.tree span {
    padding: 2px 1px 0;
}

.tree .selected span {
    background: #2f65ca;
    padding-right: 3px;
}

.twist {
    border: 5px solid transparent;
    border-top: 8px solid #aaa;
    border-bottom: none;
}

.divider {
    width: 10px;
    padding-top: 14px;
    display: flex;
    align-items: center;
    justify-content: center;
    border-right: 1px solid #2b2b2b;
}

.divider i {
    width: 5px;
    height: 15px;
    background: repeating-linear-gradient(45deg, #999 0 1px, transparent 1px 3px);
}

.editor {
    flex: 1;
    min-width: 0;
    padding: 11px 13px 8px 11px;
    display: flex;
    flex-direction: column;
}

.editor h3 {
    font-size: 15px;
    font-weight: normal;
    line-height: 18px;
}

.field {
    display: flex;
    align-items: center;
    gap: 16px;
    margin-top: 6px;
}

.field input {
    flex: 1;
    min-width: 0;
    height: 21px;
    background: #45494a;
    border: 1px solid #646464;
    color: #bbb;
    font: inherit;
    padding: 0 4px;
}

.field.off {
    color: #8c8c8c;
}

.field.off input {
    background: #3c3f41;
    border-color: #55585a;
}

fieldset {
    min-width: 0;
    margin: 0;
}

legend {
    padding: 0 2px;
}

.on-error {
    margin-top: 2px;
    padding: 13px 13px 12px;
    display: flex;
    gap: 16px;
    border: 1px solid #9b9b9b;
}

.on-error label, .check {
    display: flex;
    align-items: center;
    gap: 6px;
}

.on-error input, .check input {
    appearance: none;
    width: 14px;
    height: 14px;
    margin: 0;
    border: 1px solid #35383a;
    background: linear-gradient(#5c5f60, #4c5052);
}

.on-error input {
    border-radius: 50%;
}

.props {
    flex: 1;
    margin-top: 4px;
    padding: 8px 9px;
    border: 1px solid #2b2b2b;
    box-shadow: 1px 1px 0 #5a5d5e, inset 1px 1px 0 #5a5d5e;
}

.props .field:nth-of-type(1) {
    margin-top: 0;
}

.props .loops {
    margin-top: 8px;
    margin-bottom: 4px;
}

.props .lifetime {
    margin-top: 3px;
}

.check {
    height: 30px;
    padding-left: 5px;
}

.check input:checked {
    background: #6a6d6e;
    position: relative;
}

.check input:checked::after {
    content: "";
    position: absolute;
    left: 3px;
    top: -3px;
    width: 5px;
    height: 11px;
    border: solid #ddd;
    border-width: 0 2px 2px 0;
    transform: rotate(38deg);
}

/* popup menus */
.menu {
    position: absolute;
    background: #3c3f41;
    border: 1px solid #2a2a2a;
}

.menu button {
    width: 100%;
    height: 17px;
    padding: 2px 5px 0;
    display: flex;
    align-items: center;
    white-space: nowrap;
}

.menu button:disabled {
    color: #8c8c8c;
}

.menu .hot {
    background: #2f65ca;
}

.menu hr {
    height: 1px;
    margin: 1px 0 2px;
    border: none;
    background: #2a2a2a;
}

.menu .sub::after {
    content: "";
    margin: -2px -2px 0 auto;
    border: 4px solid transparent;
    border-left: 8px solid #aaa;
    border-right: none;
}

.menu kbd {
    margin-left: auto;
    width: 76px;
    text-align: left;
    font: 8px/15px "Liberation Mono", monospace;
    color: #eee;
}

.context {
    left: 72px;
    top: 123px;
    width: 283px;
}

.menu.context .sub::after {
    margin-right: 3px;
}

.add {
    left: 350px;
    top: 121px;
    width: 137px;
}

.samplers {
    left: 486px;
    top: 119px;
    width: 169px;
}

.pointer {
    position: absolute;
    left: 522px;
    top: 474px;
    width: 12px;
    height: 19px;
}
```
